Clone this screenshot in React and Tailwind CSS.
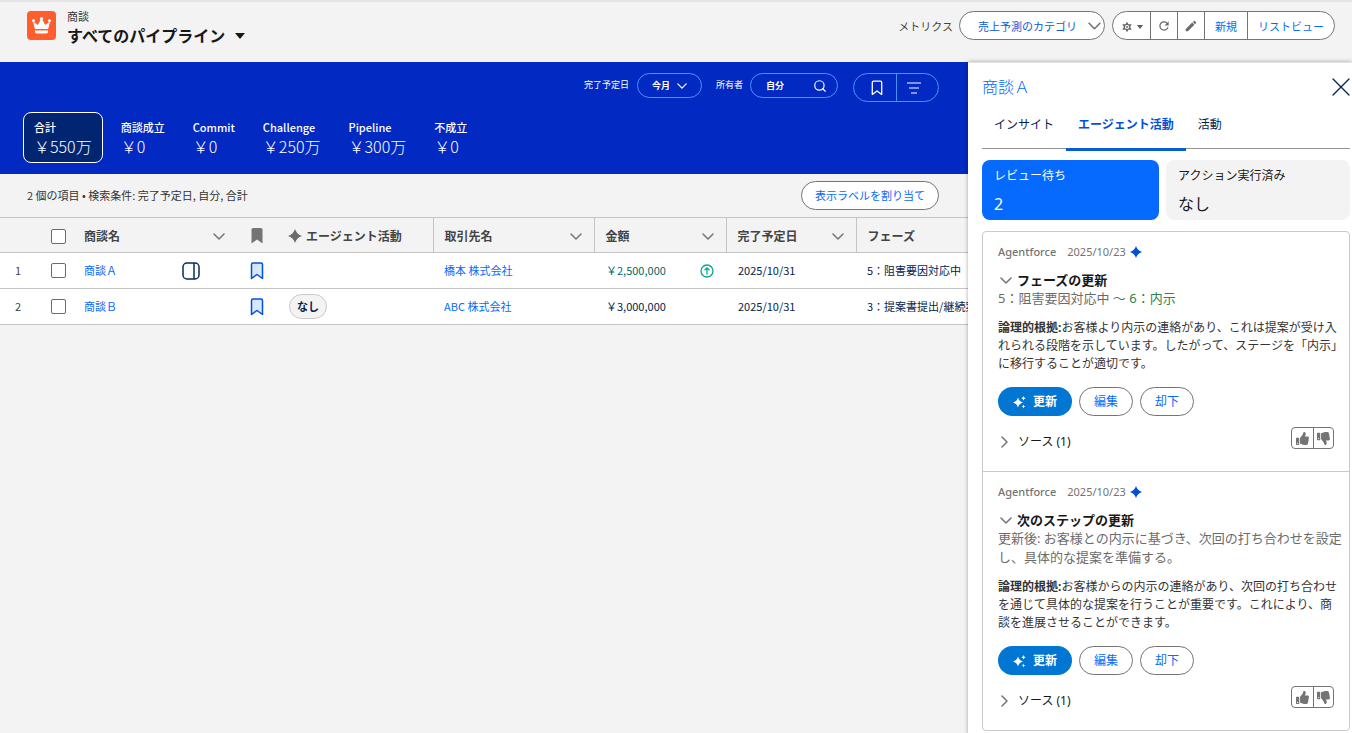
import React from "react";
import { Search } from "lucide-react";
import { FaThumbsUp, FaThumbsDown } from "react-icons/fa";
import { MdEdit, MdRefresh } from "react-icons/md";

const metrics = [
  { label: "合計", value: "￥550万", active: true },
  { label: "商談成立", value: "￥0" },
  { label: "Commit", value: "￥0" },
  { label: "Challenge", value: "￥250万" },
  { label: "Pipeline", value: "￥300万" },
  { label: "不成立", value: "￥0" },
];

const rows = [
  {
    name: "商談Ａ",
    account: "橋本 株式会社",
    amount: "￥2,500,000",
    raised: true,
    panel: true,
    date: "2025/10/31",
    phase: "5：阻害要因対応中",
  },
  {
    name: "商談Ｂ",
    account: "ABC 株式会社",
    amount: "￥3,000,000",
    agent: "なし",
    date: "2025/10/31",
    phase: "3：提案書提出/継続案件",
  },
];

const ChevronDown = ({ className = "h-[7px] w-3" }) => (
  <svg
    viewBox="0 0 12 7"
    className={className + " shrink-0"}
    fill="none"
    stroke="currentColor"
    strokeWidth="1.500"
    strokeLinecap="round"
    strokeLinejoin="round"
  >
    <path d="M1 1L6 6L11 1" />
  </svg>
);

const ChevronRight = () => (
  <svg
    viewBox="0 0 7 12"
    className="h-3 w-[7px]"
    fill="none"
    stroke="currentColor"
    strokeWidth="1.500"
    strokeLinecap="round"
    strokeLinejoin="round"
  >
    <path d="M1 1L6 6L1 11" />
  </svg>
);

const CrownIcon = () => (
  <svg viewBox="0 0 29 29" className="h-[29px] w-[29px] shrink-0 rounded bg-[#ff5d2d]">
    <g fill="#fff">
      <circle cx="6.500" cy="9.500" r="1.500" />
      <circle cx="14.500" cy="7.500" r="1.600" />
      <circle cx="22.500" cy="9.500" r="1.500" />
      <path d="M6 10.500 L10.800 14 L13.700 8.500 H15.300 L18.200 14 L23 10.500 L21.400 17.200 Q21.200 18 20.400 18 H8.600 Q7.800 18 7.600 17.200 Z" />
      <path d="M8 19.600 H21 V20.800 Q21 22.500 19.400 22.500 H9.600 Q8 22.500 8 20.800 Z" />
    </g>
  </svg>
);

const GearIcon = () => (
  <svg viewBox="0 0 12 12" className="h-3 w-3">
    <path
      fill="#6b6b6b"
      fillRule="evenodd"
      d="M6 .8L7.500 3.200L10.700 3.300L9.200 6L10.700 8.700L7.500 8.800L6 11.200L4.500 8.800L1.300 8.700L2.800 6L1.300 3.300L4.500 3.200ZM6 3.900a2.100 2.100 0 1 0 0 4.200 2.100 2.100 0 0 0 0-4.200zM6 5a1 1 0 1 1 0 2 1 1 0 0 1 0-2z"
    />
  </svg>
);

const BookmarkIcon = ({ className }) => (
  <svg viewBox="0 0 14 18" className={className} strokeWidth="1.500" strokeLinejoin="round">
    <path d="M1.500 2.500 Q1.500 1 3 1 H11 Q12.500 1 12.500 2.500 V16.500 L7 12.500 L1.500 16.500 Z" />
  </svg>
);

const Spark = ({ className }) => (
  <svg viewBox="0 0 14 14" className={className} fill="currentColor">
    <path d="M7 0 Q8.700 5.300 14 7 Q8.700 8.700 7 14 Q5.300 8.700 0 7 Q5.300 5.300 7 0Z" />
  </svg>
);

const SparklesIcon = () => (
  <svg viewBox="0 0 14 14" className="h-3.5 w-3.5" fill="currentColor">
    <path d="M5 2.500 Q6 6.500 10 7.500 Q6 8.500 5 12.500 Q4 8.500 0 7.500 Q4 6.500 5 2.500Z" />
    <path d="M10.500 1 l.7 1.600 1.600.7 -1.600.7 -.7 1.600 -.7-1.600 -1.600-.7 1.600-.7z" />
    <path d="M10.500 9.500 l.6 1.400 1.400.6 -1.400.6 -.6 1.400 -.6-1.400 -1.400-.6 1.400-.6z" />
  </svg>
);

const PanelIcon = () => (
  <svg viewBox="0 0 18 18" className="h-[18px] w-[18px]" fill="none" stroke="#0c2a55" strokeWidth="1.500">
    <rect x="1" y="1" width="16" height="16" rx="4" />
    <path d="M12 1V17" />
  </svg>
);

const UpIcon = () => (
  <svg viewBox="0 0 14 14" className="h-3.5 w-3.5" fill="none" stroke="#06a59a" strokeWidth="1.300">
    <circle cx="7" cy="7" r="6" />
    <path d="M7 10.500V4M4.500 6.200L7 3.800L9.500 6.200" />
  </svg>
);

const Checkbox = ({ label }) => (
  <input
    type="checkbox"
    aria-label={label}
    className="block h-[15px] w-[15px] appearance-none rounded-xs border border-[#6b6b6b] bg-white"
  />
);

const HeadCell = ({ children, last }) => (
  <th className={last ? "px-[11px]" : "border-r border-[#c4c4c4] pl-[11px] pr-3"}>
    <div className="flex items-center justify-between">
      {children}
      {!last && <ChevronDown className="h-[7px] w-3 text-[#747474]" />}
    </div>
  </th>
);

const Suggestion = ({ title, summary, reason }) => (
  <section className="px-[15px] pb-5 pt-3 not-last:border-b not-last:border-[#c9c9c9]">
    <div className="flex items-center text-[11px] leading-4 text-[#747474]">
      <span className="font-medium">Agentforce</span>
      <span className="ml-[11px]">2025/10/23</span>
      <Spark className="ml-1 h-3 w-3 text-[#0250d9]" />
    </div>
    <div className="mt-[11px] flex items-center pl-[2px]">
      <ChevronDown className="h-[7px] w-3 text-[#747474]" />
      <h3 className="ml-[5px] text-[13px] font-bold leading-[18px] text-[#181818]">{title}</h3>
    </div>
    <div className="-mr-3 text-[13px] leading-[19px] text-[#6b6b6b]">{summary}</div>
    <p className="-mr-3 mt-[11px] text-xs leading-[18px] text-[#333]">
      <b>論理的根拠:</b>
      {reason}
    </p>
    <div className="mt-[14px] flex gap-[7px] text-xs">
      <button className="flex h-[29px] items-center gap-1.5 rounded-full bg-[#0176d3] px-[15px] font-bold text-white">
        <SparklesIcon />
        更新
      </button>
      <button className="h-[29px] rounded-full border border-[#747474] px-[14px] text-[#066afe]">
        編集
      </button>
      <button className="h-[29px] rounded-full border border-[#747474] px-[14px] text-[#066afe]">
        却下
      </button>
    </div>
    <div className="mt-[11px] flex items-start justify-between">
      <button className="mt-1.5 flex items-center pl-[3px] text-xs leading-[18px] text-[#181818]">
        <span className="text-[#747474]">
          <ChevronRight />
        </span>
        <span className="ml-[10px]">ソース (1)</span>
      </button>
      <div className="flex h-[22px] divide-x divide-[#747474] rounded-sm border border-[#747474] text-[#747474]">
        <button aria-label="高評価" className="px-1">
          <FaThumbsUp size={13} />
        </button>
        <button aria-label="低評価" className="px-[3px]">
          <FaThumbsDown size={13} />
        </button>
      </div>
    </div>
  </section>
);

const Header = () => (
  <header className="flex h-[62px] items-start justify-between border-t-2 border-[#e5e5e5] bg-[#f3f3f3] pl-[27px] pr-[17px]">
    <div className="flex pt-[9px]">
      <CrownIcon />
      <div className="-mt-[3px] ml-[11px]">
        <p className="text-[11px] leading-[17px] text-[#333]">商談</p>
        <h1 className="flex items-center text-base font-bold leading-[21px] text-[#181818]">
          すべてのパイプライン
          <svg viewBox="0 0 10 6" className="ml-[10px] h-1.5 w-2.5">
            <path d="M0 0H10L5 6Z" fill="#181818" />
          </svg>
        </h1>
      </div>
    </div>
    <div className="flex items-center pt-[9px] text-[11px]">
      <label htmlFor="metric" className="mr-[6px] pt-0.5 text-[#444]">
        メトリクス
      </label>
      <div className="relative">
        <select
          id="metric"
          className="h-[29px] w-[146px] appearance-none rounded-full border border-[#747474] bg-white pl-[18px] pt-px text-[#0b5cd0]"
        >
          <option>売上予測のカテゴリ</option>
        </select>
        <ChevronDown className="pointer-events-none absolute right-1 top-[11px] h-2 w-[13px] text-[#747474]" />
      </div>
      <div className="ml-[7px] flex h-[29px] divide-x divide-[#747474] overflow-hidden rounded-full border border-[#747474] bg-white text-[#066afe]">
        <button aria-label="設定" className="flex items-center gap-1 pl-2 pr-[7px] pt-0.5">
          <GearIcon />
          <svg viewBox="0 0 6 4" className="h-1 w-1.5">
            <path d="M0 0H6L3 4Z" fill="#5c5c5c" />
          </svg>
        </button>
        <button aria-label="更新" className="px-[6px]">
          <MdRefresh size={14} color="#6b6b6b" />
        </button>
        <button aria-label="編集" className="px-[6px]">
          <MdEdit size={14} color="#6b6b6b" />
        </button>
        <button className="px-[10px] pt-0.5">新規</button>
        <button className="px-[10px] pt-0.5">リストビュー</button>
      </div>
    </div>
  </header>
);

const Forecast = () => (
  <div className="bg-[#0229c1] pb-[11px] pl-[23px] text-white">
    <div className="flex h-[50px] items-start justify-end pr-[29px] pt-[11px] text-[9px]">
      <span className="leading-6">完了予定日</span>
      <button className="ml-2 flex h-[25px] w-[65px] items-center justify-center gap-[7px] rounded-full border border-[#4992fe] font-bold">
        今月
        <ChevronDown className="h-1.5 w-[10px]" />
      </button>
      <label htmlFor="owner" className="ml-[14px] leading-6">
        所有者
      </label>
      <div className="ml-[7px] flex h-[25px] w-[88px] items-center rounded-full border border-[#4992fe] pl-[15px] pr-[10px]">
        <input id="owner" defaultValue="自分" className="w-full min-w-0 font-bold outline-none" />
        <Search size={14} strokeWidth={2} className="shrink-0" />
      </div>
      <div className="ml-[15px] flex h-[29px] w-[86px] divide-x divide-[#4992fe] rounded-full border border-[#4992fe]">
        <button aria-label="ブックマーク" className="flex w-[43px] items-center justify-center pl-1">
          <BookmarkIcon className="h-4 w-3 fill-none stroke-white" />
        </button>
        <button aria-label="絞り込み" className="flex flex-1 items-center pl-[10px]">
          <svg viewBox="0 0 14 12" className="h-3 w-3.5" stroke="#fff" strokeWidth="1.200">
            <path d="M0 1H14M2 6H12M4 11H10" />
          </svg>
        </button>
      </div>
    </div>
    <div className="flex gap-2">
      {metrics.map((m) => (
        <button
          key={m.label}
          className={
            m.active
              ? "h-[51px] rounded-lg border border-white bg-[#022572] px-[10px] text-left"
              : "h-[51px] px-[10px] text-left"
          }
        >
          <span className="block text-[11px] font-medium leading-4">{m.label}</span>
          <span className="block text-base leading-[22px] font-light">{m.value}</span>
        </button>
      ))}
    </div>
  </div>
);

const DealTable = () => (
  <table className="w-full table-fixed whitespace-nowrap text-left text-[11px] text-[#03234d]">
    <colgroup>
      <col className="w-[41px]" />
      <col className="w-[43px]" />
      <col className="w-[155px]" />
      <col className="w-[38px]" />
      <col className="w-[156px]" />
      <col className="w-[161px]" />
      <col className="w-[132px]" />
      <col className="w-[130px]" />
      <col />
    </colgroup>
    <thead>
      <tr className="h-[35px] border-y border-[#c4c4c4] text-xs font-bold text-[#444] [&>th]:pt-0.5">
        <th />
        <th className="pl-[10px]">
          <Checkbox label="すべて選択" />
        </th>
        <th>
          <div className="flex items-center justify-between pr-[14px]">
            商談名
            <ChevronDown className="h-[7px] w-3 text-[#747474]" />
          </div>
        </th>
        <th className="pl-[11px]">
          <BookmarkIcon className="h-[18px] w-3.5 fill-[#747474]" />
        </th>
        <th className="border-r border-[#c4c4c4] pl-[11px]">
          <div className="flex items-center gap-1">
            <Spark className="h-3.5 w-3.5 text-[#6b6b6b]" />
            エージェント活動
          </div>
        </th>
        <HeadCell>取引先名</HeadCell>
        <HeadCell>金額</HeadCell>
        <HeadCell>完了予定日</HeadCell>
        <HeadCell last>フェーズ</HeadCell>
      </tr>
    </thead>
    <tbody>
      {rows.map((row, i) => (
        <tr key={row.name} className="h-9 border-b border-[#c4c4c4] bg-white">
          <td className="pl-[15px] text-[#444]">{i + 1}</td>
          <td className="pl-[10px]">
            <Checkbox label={row.name} />
          </td>
          <td>
            <div className="flex items-center justify-between pr-[39px]">
              <a href="#" className="text-[#066afe]">
                {row.name}
              </a>
              {row.panel && (
                <button aria-label="サイドパネル">
                  <PanelIcon />
                </button>
              )}
            </div>
          </td>
          <td className="pl-[11px]">
            <BookmarkIcon className="h-[18px] w-3.5 fill-[#d8e6fe] stroke-[#0250d9]" />
          </td>
          <td className="pl-3">
            {row.agent && (
              <span className="inline-block rounded-full border border-[#c9c9c9] bg-[#f3f3f3] px-[7px] text-[11px] font-bold leading-[23px]">
                {row.agent}
              </span>
            )}
          </td>
          <td className="pl-[11px]">
            <a href="#" className="text-[#066afe]">
              {row.account}
            </a>
          </td>
          <td className="pl-3 pr-3">
            <div className="flex items-center justify-between">
              <span className={row.raised ? "text-[#056764]" : ""}>{row.amount}</span>
              {row.raised && <UpIcon />}
            </div>
          </td>
          <td className="pl-3">{row.date}</td>
          <td className="overflow-hidden pl-[11px]">{row.phase}</td>
        </tr>
      ))}
    </tbody>
  </table>
);

const SidePanel = () => (
  <aside className="w-96 shrink-0 border-t border-[#e5e5e5] bg-white pb-[3px] pl-[14px] pr-0.5 font-['Noto_Sans','Noto_Sans_CJK_JP',sans-serif] shadow-[0_0_4px_rgba(0,0,0,0.35)]">
    <div className="flex items-center justify-between pt-3">
      <h2 className="text-base font-light leading-6 text-[#066afe]">商談Ａ</h2>
      <button aria-label="閉じる">
        <svg viewBox="0 0 18 18" className="h-[18px] w-[18px]" stroke="#03234d" strokeWidth="1.300" strokeLinecap="round">
          <path d="M1 1L17 17M17 1L1 17" />
        </svg>
      </button>
    </div>
    <div role="tablist" className="mt-[6px] flex h-11 border-b border-[#939393] text-xs text-[#03234d]">
      <button role="tab" className="px-3 pb-1">
        インサイト
      </button>
      <button
        role="tab"
        aria-selected="true"
        className="-mb-[3px] border-b-3 border-[#0b5cd0] px-3 pb-1 font-bold text-[#0250d9]"
      >
        エージェント活動
      </button>
      <button role="tab" className="px-3 pb-1">
        活動
      </button>
    </div>
    <div className="mt-[11px] flex gap-[7px]">
      <button className="h-[60px] w-[177px] rounded-lg bg-[#066afe] px-3 pt-0.5 text-left text-white">
        <span className="block text-xs leading-5">レビュー待ち</span>
        <span className="mt-1.5 block text-base leading-6">2</span>
      </button>
      <button className="h-[60px] flex-1 rounded-lg bg-[#f3f3f3] px-3 pt-0.5 text-left text-[#181818]">
        <span className="block text-xs leading-5">アクション実行済み</span>
        <span className="mt-1.5 block text-base leading-6">なし</span>
      </button>
    </div>
    <div className="mt-[11px] rounded-sm border border-[#c9c9c9]">
      <Suggestion
        title="フェーズの更新"
        summary={
          <>
            5：阻害要因対応中 ～ <span className="text-[#2e844a]">6：内示</span>
          </>
        }
        reason={
          <>
            お客様より内示の連絡があり、これは提案が受け入
            <br />
            れられる段階を示しています。したがって、ステージを「内示」
            <br />
            に移行することが適切です。
          </>
        }
      />
      <Suggestion
        title="次のステップの更新"
        summary={
          <>
            更新後: お客様との内示に基づき、次回の打ち合わせを設定
            <br />
            し、具体的な提案を準備する。
          </>
        }
        reason={
          <>
            お客様からの内示の連絡があり、次回の打ち合わせ
            <br />
            を通じて具体的な提案を行うことが重要です。これにより、商
            <br />
            談を進展させることができます。
          </>
        }
      />
    </div>
  </aside>
);

export default function App() {
  return (
    <div className="flex min-h-screen flex-col bg-[#f3f3f3] font-['Noto_Sans_CJK_JP',sans-serif]">
      <Header />
      <div className="flex flex-1">
        <main className="min-w-0 flex-1 overflow-hidden">
          <Forecast />
          <div className="flex h-[43px] items-center justify-between pl-[27px] pr-[29px] text-[11px] text-[#333]">
            <p>2 個の項目 • 検索条件: 完了予定日, 自分, 合計</p>
            <button className="h-[29px] rounded-full border border-[#747474] bg-white px-[13px] text-[#066afe]">
              表示ラベルを割り当て
            </button>
          </div>
          <DealTable />
        </main>
        <SidePanel />
      </div>
    </div>
  );
}
